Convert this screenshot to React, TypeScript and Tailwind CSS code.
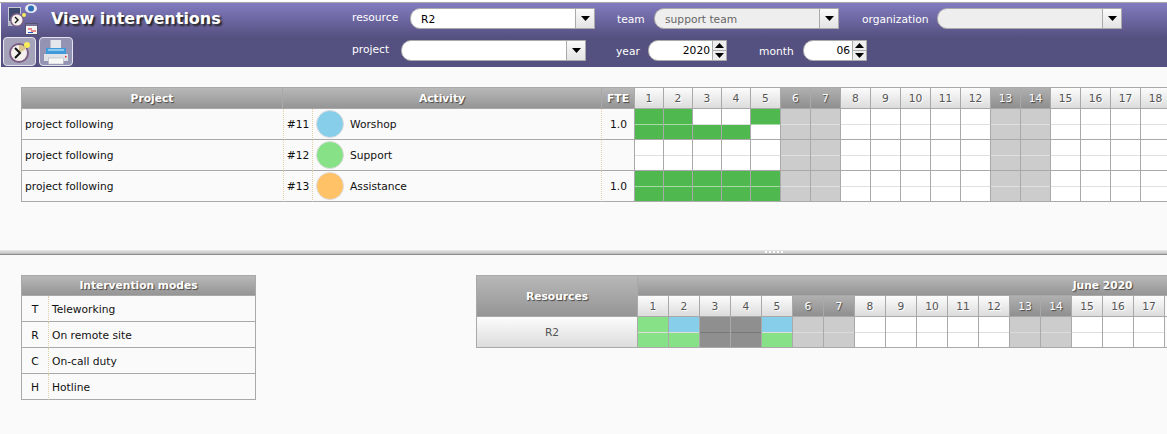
import React from 'react';

const FONT = "font-['DejaVu_Sans','Liberation_Sans',sans-serif]";
const HEAD = 'bg-[linear-gradient(#b8b8b8,#959595)] text-white font-bold [text-shadow:1px_1px_1px_#444]';
const DAY_HEAD = 'bg-[linear-gradient(#fcfcfc,#dcdcdc)] text-[#555] [text-shadow:1px_1px_0_#fff]';
const WEEKEND_HEAD = 'bg-[linear-gradient(#b0b0b0,#8f8f8f)] text-white [text-shadow:1px_1px_1px_#444]';

const WEEKEND = [6, 7, 13, 14];

const ClockIcon: React.FC = () => (
  <svg width="24" height="24" viewBox="0 0 24 24">
    <circle cx="11" cy="13" r="10" fill="#7d5f86" />
    <circle cx="11" cy="13" r="8" fill="#f4f1ee" />
    <path d="M11 13 L11 5 A8 8 0 0 1 18 9 Z" fill="#d8c48e" />
    <path d="M7 8 L12 13 L7 18" fill="none" stroke="#111" strokeWidth="2" />
    <circle cx="19" cy="5" r="3" fill="#f7ec5a" />
  </svg>
);

const PrinterIcon: React.FC = () => (
  <svg width="26" height="26" viewBox="0 0 26 26">
    <rect x="7.5" y="1" width="10.5" height="9" fill="#e3e6ea" />
    <path d="M3 9 H23 V15 H3 Z" fill="#3e9ad8" />
    <path d="M5 10 H21 V12 H5 Z" fill="#8cc6ec" />
    <path d="M1 15 H25 V22 H1 Z" fill="#dfe3e8" />
    <rect x="5.5" y="19" width="15" height="6" fill="#f6f6f6" stroke="#a8adb5" strokeWidth="0.5" />
    <rect x="22" y="17" width="1.5" height="1.5" fill="#d33" />
  </svg>
);

const PageLogo: React.FC = () => (
  <svg width="38" height="34" viewBox="0 0 38 34" className="absolute left-[6px] top-[1px]">
    <rect x="1.5" y="3.5" width="12" height="14" fill="#3d4a6d" stroke="#c9cbd8" />
    <path d="M1 18 H12 V22 H1 Z" fill="#b9bcc9" />
    <ellipse cx="24" cy="4.5" rx="6" ry="4.5" fill="#e7e9f2" />
    <circle cx="24" cy="4.5" r="3" fill="#2f6fb5" />
    <circle cx="10" cy="16" r="7" fill="#7d5f86" />
    <circle cx="10" cy="16" r="5.5" fill="#f4f1ee" />
    <path d="M8 13 L11 16 L8 19" fill="none" stroke="#111" strokeWidth="1.4" />
    <circle cx="17" cy="11" r="2" fill="#f7ec5a" />
    <rect x="18.5" y="19.5" width="12" height="11" fill="#f4f4f4" stroke="#55526f" />
    <rect x="19" y="20" width="11" height="2" fill="#77749a" />
    <path d="M21 25 H25 M24 27 H29" stroke="#d22" strokeWidth="1" />
    <path d="M21 28.5 H26" stroke="#2255cc" strokeWidth="1" />
  </svg>
);

const Arrow: React.FC<{ up?: boolean }> = ({ up }) => (
  <svg width="9" height="5" viewBox="0 0 9 5">
    <path d={up ? 'M0 5 L4.5 0 L9 5 Z' : 'M0 0 L9 0 L4.5 5 Z'} fill="#000" />
  </svg>
);

const Select: React.FC<{ value?: string; disabled?: boolean; className: string }> = ({ value, disabled, className }) => (
  <div className={`flex h-[21px] rounded-l-[10px] border border-[#aaa] ${disabled ? 'bg-[#eeeeee] text-[#666]' : 'bg-white text-black'} ${className}`}>
    <div className="flex-1 pl-[10px] pt-px text-[10.7px] leading-[19px]">{value}</div>
    <div className="flex w-[19px] items-center justify-center border-l border-[#aaa] bg-[linear-gradient(#fafafa,#e4e4e4)]">
      <Arrow />
    </div>
  </div>
);

const Spinner: React.FC<{ value: string; className: string }> = ({ value, className }) => (
  <div className={`flex h-[21px] rounded-l-[10px] border border-[#aaa] bg-white ${className}`}>
    <div className="flex-1 pr-[2px] text-right text-[10.7px] leading-[19px] text-black">{value}</div>
    <div className="flex w-[14px] flex-col border-l border-[#aaa] bg-[#eee]">
      <div className="flex h-[10px] items-center justify-center border-b border-[#aaa]"><Arrow up /></div>
      <div className="flex flex-1 items-center justify-center"><Arrow /></div>
    </div>
  </div>
);

const Label: React.FC<{ text: string; className: string }> = ({ text, className }) => (
  <span className={`text-[10.7px] text-white ${className}`}>{text}</span>
);

const Header: React.FC = () => (
  <div className="ml-px flex h-[64px] bg-[linear-gradient(#827bc0,#54507f_55%)]">
    <div className="relative w-[351px] shrink-0">
      <PageLogo />
      <div className="absolute left-[50px] top-[4px] text-[16px] font-bold text-white [text-shadow:2px_2px_2px_#222]">View interventions</div>
      <div className="absolute left-[2px] top-[34px] flex gap-[3px]">
        <button className="flex h-[29px] w-[33px] items-center justify-center rounded-[4px] border border-[#e4e2ee] bg-[#a5a3ba]"><ClockIcon /></button>
        <button className="flex h-[29px] w-[34px] items-center justify-center rounded-[4px] border border-[#e4e2ee] bg-[#9593b3]"><PrinterIcon /></button>
      </div>
    </div>
    <div className="flex flex-col gap-[11px] pt-[5px]">
      <div className="flex h-[21px] items-center">
        <Label text="resource" className="w-[58px]" />
        <Select value="R2" className="w-[185px]" />
        <Label text="team" className="ml-[22px] mt-[4px] w-[37px]" />
        <Select value="support team" disabled className="w-[185px]" />
        <Label text="organization" className="ml-[23px] mt-[4px] w-[75px]" />
        <Select disabled className="w-[185px]" />
      </div>
      <div className="flex h-[21px] items-center">
        <Label text="project" className="w-[49px]" />
        <Select className="w-[185px]" />
        <Label text="year" className="ml-[30px] mt-[4px] w-[32px]" />
        <Spinner value="2020" className="w-[79px]" />
        <Label text="month" className="ml-[32px] mt-[4px] w-[44px]" />
        <Spinner value="06" className="w-[64px]" />
      </div>
    </div>
  </div>
);

// one day cell, cut in two half-day slots
const Slots: React.FC<{ top: string; bottom: string; line?: string }> = ({ top, bottom, line = 'bg-[#e0e0e0]' }) => (
  <div className="flex h-[30px] flex-col">
    <div className={`h-[15px] ${top}`} />
    <div className={`h-px ${line}`} />
    <div className={`h-[14px] ${bottom}`} />
  </div>
);

const GREEN = 'bg-[#4fb94f]';
const FREE = 'bg-white';
const OFF = 'bg-[#cccccc]';

const activities = [
  { id: '#11', name: 'Worshop', color: 'bg-[#87ceeb]', fte: '1.0', top: [1, 2, 5], bottom: [1, 2, 3, 4] },
  { id: '#12', name: 'Support', color: 'bg-[#87e187]', fte: '', top: [], bottom: [] },
  { id: '#13', name: 'Assistance', color: 'bg-[#ffc266]', fte: '1.0', top: [1, 2, 3, 4, 5], bottom: [1, 2, 3, 4, 5] },
];

const days = Array.from({ length: 18 }, (_, i) => i + 1);

const ActivityTable: React.FC = () => (
  <table className="w-[1150px] table-fixed border-separate border-spacing-0 text-[10.7px] text-[#111]">
    <colgroup>
      <col className="w-[262px]" />
      <col className="w-[30px]" />
      <col className="w-[289px]" />
      <col className="w-[33px]" />
      {days.map((d) => <col key={d} className={d <= 4 ? 'w-[29px]' : 'w-[30px]'} />)}
    </colgroup>
    <thead>
      <tr className="h-[22px]">
        <th className={`border border-[#a9a9a9] p-0 pt-[2px] ${HEAD}`}>Project</th>
        <th colSpan={2} className={`border-y border-r border-[#a9a9a9] p-0 pt-[2px] ${HEAD}`}>Activity</th>
        <th className={`border-y border-r border-[#a9a9a9] p-0 pt-[2px] ${HEAD}`}>FTE</th>
        {days.map((d) => (
          <th key={d} className={`border-y border-r border-[#a9a9a9] p-0 pt-[2px] font-normal ${WEEKEND.includes(d) ? WEEKEND_HEAD : DAY_HEAD}`}>{d}</th>
        ))}
      </tr>
    </thead>
    <tbody>
      {activities.map((a) => (
        <tr key={a.id} className="h-[31px]">
          <td className="border-b border-l border-[#a9a9a9] bg-[#fafafa] pl-[3px] pt-[2px]">project following</td>
          <td className="border-b border-l border-r border-b-[#a9a9a9] border-x-[#e2cfa8] bg-[#fafafa] pt-[2px] text-center [border-left-style:dotted] [border-right-style:dotted]">{a.id}</td>
          <td className="border-b border-r border-b-[#a9a9a9] border-r-[#e2cfa8] bg-[#fafafa] p-0 [border-right-style:dotted]">
            <div className="flex items-center gap-[6px] pl-[3px]">
              <span className={`h-[28px] w-[28px] rounded-full border border-[#dcdcdc] ${a.color}`} />
              <span className="pt-[2px]">{a.name}</span>
            </div>
          </td>
          <td className="border-b border-r border-[#a9a9a9] bg-[#fafafa] pr-[7px] pt-[2px] text-right">{a.fte}</td>
          {days.map((d) => {
            const off = WEEKEND.includes(d);
            return (
              <td key={d} className="border-b border-r border-[#a9a9a9] p-0">
                <Slots
                  top={off ? OFF : a.top.includes(d) ? GREEN : FREE}
                  bottom={off ? OFF : a.bottom.includes(d) ? GREEN : FREE}
                  line={a.top.includes(d) ? 'bg-[#a5dca5]' : 'bg-[#e0e0e0]'}
                />
              </td>
            );
          })}
        </tr>
      ))}
    </tbody>
  </table>
);

const modes = [
  ['T', 'Teleworking'],
  ['R', 'On remote site'],
  ['C', 'On-call duty'],
  ['H', 'Hotline'],
];

const ModesTable: React.FC = () => (
  <table className="w-[235px] shrink-0 table-fixed border-separate border-spacing-0 self-start text-[10.7px] text-[#111]">
    <colgroup>
      <col className="w-[28px]" />
      <col />
    </colgroup>
    <thead>
      <tr className="h-[21px]">
        <th colSpan={2} className={`border border-[#a9a9a9] p-0 pt-[2px] ${HEAD}`}>Intervention modes</th>
      </tr>
    </thead>
    <tbody>
      {modes.map(([code, label]) => (
        <tr key={code} className="h-[26px]">
          <td className="border-b border-l border-r border-b-[#a9a9a9] border-l-[#a9a9a9] border-r-[#e2cfa8] pt-[4px] text-center [border-right-style:dotted]">{code}</td>
          <td className="border-b border-r border-[#a9a9a9] pl-[3px] pt-[4px]">{label}</td>
        </tr>
      ))}
    </tbody>
  </table>
);

// only the days that fit the window, the rest of the month is one blank column
const monthDays = Array.from({ length: 17 }, (_, i) => i + 1);

const BLUE = 'bg-[#87ceeb]';
const LIGHT = 'bg-[#87e187]';
const BUSY = 'bg-[#8f8f8f]';

const planning: Record<number, [string, string]> = {
  1: [LIGHT, LIGHT],
  2: [BLUE, LIGHT],
  3: [BUSY, BUSY],
  4: [BUSY, BUSY],
  5: [BLUE, LIGHT],
};

const ResourcesTable: React.FC = () => (
  <table className="w-[1092px] shrink-0 table-fixed border-separate border-spacing-0 self-start text-[10.7px]">
    <colgroup>
      <col className="w-[162px]" />
      {monthDays.map((d) => <col key={d} className="w-[31px]" />)}
      <col className="w-[403px]" />
    </colgroup>
    <thead>
      <tr className="h-[21px]">
        <th rowSpan={2} className={`border border-[#a9a9a9] p-0 pt-[2px] ${HEAD}`}>Resources</th>
        <th colSpan={18} className={`border-y border-r border-[#a9a9a9] p-0 pt-[2px] ${HEAD}`}>June 2020</th>
      </tr>
      <tr className="h-[21px]">
        {monthDays.map((d) => (
          <th key={d} className={`border-b border-r border-[#a9a9a9] p-0 pt-[2px] font-normal ${WEEKEND.includes(d) ? WEEKEND_HEAD : DAY_HEAD}`}>{d}</th>
        ))}
        <th className="border-b border-[#a9a9a9] p-0" />
      </tr>
    </thead>
    <tbody>
      <tr className="h-[31px]">
        <td className="border-x border-b border-[#a9a9a9] bg-[linear-gradient(#fcfcfc,#dcdcdc)] pr-[10px] pt-[3px] text-center text-[#555]">R2</td>
        {monthDays.map((d) => {
          const off = WEEKEND.includes(d);
          const plan = planning[d];
          return (
            <td key={d} className="border-b border-r border-[#a9a9a9] p-0">
              <Slots
                top={plan ? plan[0] : off ? OFF : FREE}
                bottom={plan ? plan[1] : off ? OFF : FREE}
                line={plan && plan[0] === BUSY ? 'bg-[#777]' : 'bg-[#dddddd]'}
              />
            </td>
          );
        })}
        <td className="border-b border-[#a9a9a9] p-0" />
      </tr>
    </tbody>
  </table>
);

const Splitter: React.FC = () => (
  <div className="mt-[48px] flex h-[5px] items-start justify-center border-b border-[#8c8c8c] bg-[linear-gradient(#e8e8e8,#bdbdbd)]">
    <div className="flex gap-[2px] pl-[380px] pt-px">
      {[0, 1, 2, 3, 4].map((i) => <span key={i} className="h-[2px] w-[2px] bg-white" />)}
    </div>
  </div>
);

export default function App() {
  return (
    <div className={`h-[434px] w-[1167px] overflow-hidden bg-[#fafafa] ${FONT}`}>
      <div className="h-[3px] border-t border-b border-t-white border-b-[#a9a9a9]" />
      <Header />
      <div className="pl-[21px] pt-[20px]">
        <ActivityTable />
      </div>
      <Splitter />
      <div className="flex gap-[220px] pl-[21px] pt-[20px]">
        <ModesTable />
        <ResourcesTable />
      </div>
    </div>
  );
}
